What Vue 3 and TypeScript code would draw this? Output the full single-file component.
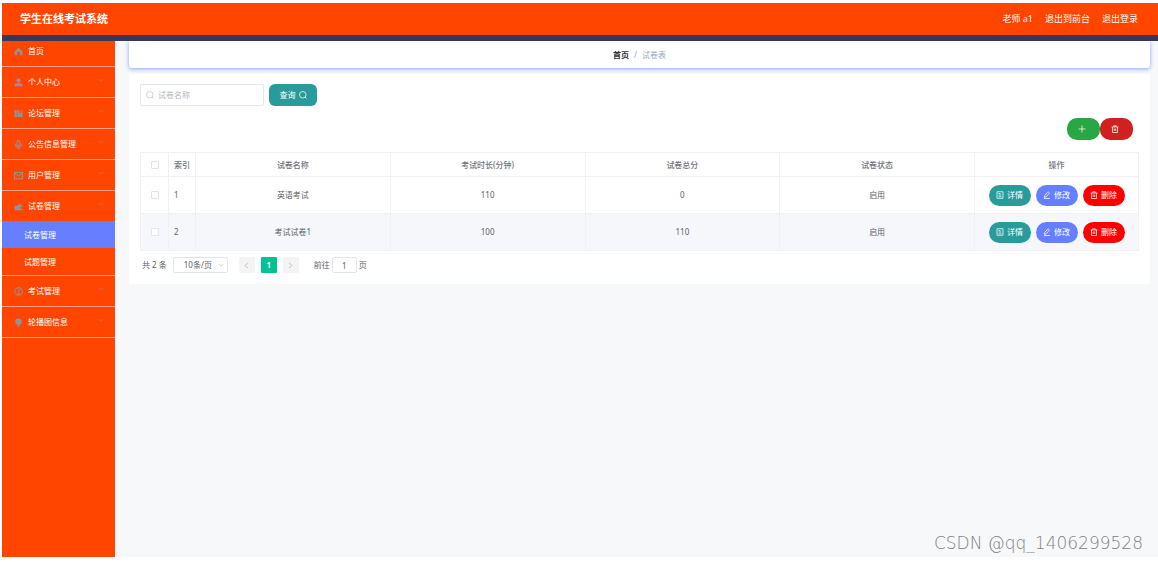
<script setup lang="ts">
import { ref } from 'vue'

interface MenuItem {
  label: string
  icon: string
  arrow?: 'down' | 'up'
  children?: string[]
}
interface Paper {
  id: number
  name: string
  minutes: number
  score: number
  status: string
}

const menu: MenuItem[] = [
  { label: '首页', icon: 'home' },
  { label: '个人中心', icon: 'user', arrow: 'down' },
  { label: '论坛管理', icon: 'book', arrow: 'down' },
  { label: '公告信息管理', icon: 'mic', arrow: 'down' },
  { label: '用户管理', icon: 'mail', arrow: 'down' },
  { label: '试卷管理', icon: 'wallet', arrow: 'up', children: ['试卷管理', '试题管理'] },
  { label: '考试管理', icon: 'clock', arrow: 'down' },
  { label: '轮播图信息', icon: 'balloon', arrow: 'down' },
]
const active = ref('试卷管理')
const keyword = ref('')
const page = ref('1')
const papers: Paper[] = [
  { id: 1, name: '英语考试', minutes: 110, score: 0, status: '启用' },
  { id: 2, name: '考试试卷1', minutes: 100, score: 110, status: '启用' },
]
</script>

<template>
  <div class="page">
    <header class="header">
      <h1>学生在线考试系统</h1>
      <nav class="user-nav">
        <span>老师 a1</span>
        <a href="#">退出到前台</a>
        <a href="#">退出登录</a>
      </nav>
    </header>

    <div class="body">
      <aside class="sidebar">
        <ul class="menu">
          <li v-for="item in menu" :key="item.label" class="menu-item">
            <a href="#" class="menu-link">
              <svg class="menu-icon" viewBox="0 0 16 16" aria-hidden="true">
                <path v-if="item.icon === 'home'" class="solid" d="M8 1.5 15 8v6.5h-4.500V11a2.500 2.500 0 0 0-5 0v3.500H1V8z" />
                <g v-else-if="item.icon === 'user'" class="solid">
                  <circle cx="8" cy="4.500" r="3.700" />
                  <path d="M1 14.500V12.500c0-2 1.500-3.300 4-3.300h6c2.500 0 4 1.300 4 3.300v2z" />
                </g>
                <path v-else-if="item.icon === 'book'" class="solid" d="M1 2h4v12H1zM6 2h4v6l1.500-1.500L13 8V2h2v12H6z" />
                <g v-else-if="item.icon === 'mic'" class="line">
                  <rect x="5.500" y="1" width="5" height="9" rx="2.500" />
                  <path d="M3 7v1a5 5 0 0 0 10 0V7M8 13v2.500M5.500 15.500h5" />
                </g>
                <g v-else-if="item.icon === 'mail'" class="line">
                  <rect x="1" y="2.500" width="14" height="11.500" />
                  <path d="m1.500 4 6.500 5 6.500-5" />
                </g>
                <path v-else-if="item.icon === 'wallet'" class="solid" d="M1 6.500h4.500L10 2l4 4.500h1V9h-4v3h4v2.500H1z" />
                <g v-else-if="item.icon === 'clock'" class="line">
                  <circle cx="8" cy="8" r="6.800" />
                  <path d="M9 4 7.500 9.500M5.500 11.500h5" />
                </g>
                <path v-else class="solid" d="M8 1a5.800 5.800 0 0 1 5.800 5.800c0 2.800-2 5-4.300 5.700L10.500 15h-5l1-2.500C4.200 11.800 2.200 9.600 2.200 6.800A5.800 5.800 0 0 1 8 1z" />
              </svg>
              <span>{{ item.label }}</span>
              <svg v-if="item.arrow" class="arrow" :class="{ up: item.arrow === 'up' }" viewBox="0 0 8 8" aria-hidden="true">
                <path d="m1 2.500 3 3 3-3" />
              </svg>
            </a>
            <ul v-if="item.children" class="submenu">
              <li v-for="child in item.children" :key="child">
                <a href="#" :class="{ active: child === active }" @click.prevent="active = child">{{ child }}</a>
              </li>
            </ul>
          </li>
        </ul>
      </aside>

      <main class="main">
        <nav class="breadcrumb">
          <a href="#">首页</a><i>/</i><span>试卷表</span>
        </nav>

        <section class="card">
          <form class="search" @submit.prevent>
            <label class="search-box">
              <svg viewBox="0 0 16 16" aria-hidden="true"><circle cx="7.500" cy="7.500" r="6.500" /><path d="m12 12 3 3" /></svg>
              <input v-model="keyword" type="text" placeholder="试卷名称" aria-label="试卷名称" />
            </label>
            <button type="submit" class="query">
              查询
              <svg viewBox="0 0 16 16" aria-hidden="true"><circle cx="7.500" cy="7.500" r="6.500" /><path d="m12 12 3 3" /></svg>
            </button>
          </form>

          <div class="tools">
            <button type="button" class="add" aria-label="新增">
              <svg viewBox="0 0 16 16" aria-hidden="true"><path d="M8 1v14M1 8h14" /></svg>
            </button>
            <button type="button" class="remove" aria-label="删除">
              <svg viewBox="0 0 16 16" aria-hidden="true"><path d="M1 4h14M5.500 4V1.500h5V4M3 4v11h10V4M6.500 7v5M9.500 7v5" /></svg>
            </button>
          </div>

          <table class="table">
            <colgroup>
              <col class="col-check" />
              <col class="col-index" />
              <col /><col /><col /><col />
              <col class="col-actions" />
            </colgroup>
            <thead>
              <tr>
                <th><input type="checkbox" aria-label="全选" /></th>
                <th class="index">索引</th>
                <th>试卷名称</th>
                <th>考试时长(分钟)</th>
                <th>试卷总分</th>
                <th>试卷状态</th>
                <th>操作</th>
              </tr>
            </thead>
            <tbody>
              <tr v-for="paper in papers" :key="paper.id">
                <td><input type="checkbox" :aria-label="paper.name" /></td>
                <td class="index">{{ paper.id }}</td>
                <td>{{ paper.name }}</td>
                <td>{{ paper.minutes }}</td>
                <td>{{ paper.score }}</td>
                <td>{{ paper.status }}</td>
                <td>
                  <div class="actions">
                    <button type="button" class="detail">
                      <svg viewBox="0 0 16 16" aria-hidden="true"><path d="M2 1.500h12v13H2zM5 5h4M5 8h6M5 11.500h6" /></svg>详情
                    </button>
                    <button type="button" class="edit">
                      <svg viewBox="0 0 16 16" aria-hidden="true"><path d="M3 9.500 10 1.500l3 2.500-7 8-3.500.8zM2 15h12" /></svg>修改
                    </button>
                    <button type="button" class="delete">
                      <svg viewBox="0 0 16 16" aria-hidden="true"><path d="M1 4h14M5.500 4V1.500h5V4M3 4v11h10V4M6.500 7v5M9.500 7v5" /></svg>删除
                    </button>
                  </div>
                </td>
              </tr>
            </tbody>
          </table>

          <div class="pagination">
            <span>共 2 条</span>
            <span class="size">
              <select aria-label="每页条数">
                <option>10条/页</option>
              </select>
              <svg viewBox="0 0 8 8" aria-hidden="true"><path d="m1 2.500 3 3 3-3" /></svg>
            </span>
            <button type="button" class="pager" aria-label="上一页" disabled>
              <svg viewBox="0 0 8 8" aria-hidden="true"><path d="M5.500 1 2.500 4l3 3" /></svg>
            </button>
            <button type="button" class="pager current">1</button>
            <button type="button" class="pager" aria-label="下一页" disabled>
              <svg viewBox="0 0 8 8" aria-hidden="true"><path d="m2.500 1 3 3-3 3" /></svg>
            </button>
            <label class="jump">前往<input v-model="page" type="text" />页</label>
          </div>
        </section>
      </main>
    </div>
    <div class="watermark">CSDN @qq_1406299528</div>
  </div>
</template>

<style>
body {
  margin: 0;
  background: #fff;
}
</style>

<style scoped>
* {
  box-sizing: border-box;
}
.page {
  position: relative;
  display: flex;
  flex-direction: column;
  min-height: 100vh;
  padding: 3px 0 5px 2px;
  color: #606266;
  font: 8px/12px "Noto Sans", "Noto Sans CJK SC", sans-serif;
}
button,
input,
select {
  font: inherit;
  color: inherit;
}
button {
  display: flex;
  align-items: center;
  justify-content: center;
  padding: 0;
  border: 0;
  color: #fff;
  cursor: pointer;
}
a {
  color: inherit;
  text-decoration: none;
}
ul {
  margin: 0;
  padding: 0;
  list-style: none;
}
svg {
  flex: none;
  fill: none;
  stroke: currentColor;
}
svg[viewBox="0 0 16 16"] {
  stroke-width: 1.5;
}
.header {
  display: flex;
  align-items: center;
  justify-content: space-between;
  height: 38px;
  padding: 0 20px 0 18px;
  border-bottom: 6px solid #343957;
  background: #ff4500;
  color: #fff;
}
.header h1 {
  margin: 0;
  font-size: 11px;
  line-height: 16px;
  font-weight: 700;
}
.user-nav {
  display: flex;
  gap: 12px;
  font-size: 9px;
}
.body {
  display: flex;
  flex: 1;
  background: #f7f8fa;
}
.sidebar {
  flex: none;
  width: 113px;
  background: #ff4500;
  color: #fff;
}
.menu-item {
  border-bottom: 1px solid #ffa383;
}
.menu-link {
  display: flex;
  align-items: center;
  height: 30px;
  padding: 0 11px 0 12px;
}
.menu-item:first-child .menu-link {
  height: 25px;
  padding-bottom: 5px;
}
.menu-icon {
  width: 9px;
  height: 9px;
  margin-right: 5px;
  color: #909399;
}
.solid {
  fill: currentColor;
  stroke: none;
}
.line {
  stroke-width: 1.8;
}
.arrow {
  width: 6px;
  height: 6px;
  margin-left: auto;
  margin-bottom: 4px;
  color: #b08070;
}
.arrow.up {
  transform: rotate(180deg);
}
.submenu a {
  display: flex;
  align-items: center;
  height: 27px;
  padding-left: 22px;
}
.submenu a.active {
  background: #667fff;
}
.main {
  flex: 1;
  min-width: 0;
  padding: 0 8px 0 14px;
}
.breadcrumb {
  display: flex;
  align-items: center;
  justify-content: center;
  height: 27px;
  border-radius: 0 0 3px 3px;
  background: #fff;
  box-shadow: 0 1px 4px #8ea0ff;
  clip-path: inset(0 -6px -6px -6px);
  color: #97a8be;
}
.breadcrumb a {
  color: #303133;
  font-weight: 700;
}
.breadcrumb i {
  margin: 0 5px;
  font-style: normal;
}
.card {
  margin-top: 6px;
  padding: 10px 11px 11px;
  background: #fff;
}
.search {
  display: flex;
  gap: 5px;
}
.search-box {
  display: flex;
  align-items: center;
  width: 124px;
  height: 22px;
  padding-left: 5px;
  border: 1px solid #e4e7ed;
  border-radius: 2px;
  color: #c0c4cc;
}
.search-box svg,
.query svg {
  width: 8px;
  height: 8px;
}
.search-box input {
  width: 100%;
  min-width: 0;
  padding: 0 4px;
  border: 0;
  outline: 0;
  background: none;
  color: #606266;
}
.search-box input::placeholder {
  color: #b4b8c0;
}
.query {
  gap: 3px;
  width: 48px;
  height: 22px;
  border-radius: 6px;
  background: #289b9b;
}
.tools {
  display: flex;
  justify-content: flex-end;
  margin: 12px 6px 12px 0;
}
.tools button {
  width: 33px;
  height: 22px;
  border-radius: 10px;
}
.tools svg {
  width: 8px;
  height: 8px;
  margin-right: 3px;
}
.tools .add {
  background: #28a745;
}
.tools .remove {
  background: #d02020;
}
.table {
  width: 100%;
  table-layout: fixed;
  border-collapse: collapse;
}
.col-check {
  width: 28px;
}
.col-index {
  width: 27px;
}
.col-actions {
  width: 164px;
}
.table th,
.table td {
  height: 37px;
  padding: 0;
  border: 1px solid #eff1f6;
  text-align: center;
}
.table th {
  height: 24px;
  color: #73767d;
  font-weight: 500;
}
.table .index {
  padding-left: 5px;
  text-align: left;
}
.table tbody tr:nth-child(even) {
  background: #f5f7fa;
}
.table input {
  display: block;
  width: 8px;
  height: 8px;
  margin: 0 auto;
  border: 1px solid #e2e5ea;
  border-radius: 1px;
  background: #fff;
  appearance: none;
}
.table input:checked {
  background: #667fff;
}
.actions {
  display: flex;
  justify-content: center;
  gap: 5px;
}
.actions button {
  gap: 3px;
  width: 42px;
  height: 21px;
  border-radius: 11px;
}
.actions svg {
  width: 8px;
  height: 8px;
}
.actions .detail {
  background: #289b9b;
}
.actions .edit {
  background: #667fff;
}
.actions .delete {
  background: #f00;
}
.pagination {
  display: flex;
  align-items: center;
  gap: 6px;
  height: 16px;
  margin-top: 6px;
  padding-left: 2px;
}
.size {
  position: relative;
  display: flex;
  margin-right: 5px;
}
.size select {
  width: 55px;
  height: 16px;
  padding: 0 8px 0 10px;
  border: 1px solid #e2e5ea;
  border-radius: 2px;
  background: #fff;
  appearance: none;
}
.size svg {
  position: absolute;
  top: 5px;
  right: 4px;
  width: 6px;
  height: 6px;
  color: #c0c4cc;
  pointer-events: none;
}
.pager {
  width: 16px;
  height: 16px;
  border-radius: 1px;
  background: #f4f4f5;
  color: #b0b3ba;
}
.pager svg {
  width: 7px;
  height: 7px;
}
.pager.current {
  background: #00c292;
  color: #fff;
  font-weight: 700;
}
.jump {
  display: flex;
  align-items: center;
  gap: 2px;
  margin-left: 9px;
}
.jump input {
  width: 25px;
  height: 16px;
  padding: 0;
  border: 1px solid #e2e5ea;
  border-radius: 2px;
  background: #fff;
  text-align: center;
}
.watermark {
  position: absolute;
  right: 15px;
  bottom: 8px;
  color: #808285;
  font: 200 17px/22px "DejaVu Sans", sans-serif;
  pointer-events: none;
}
</style>
